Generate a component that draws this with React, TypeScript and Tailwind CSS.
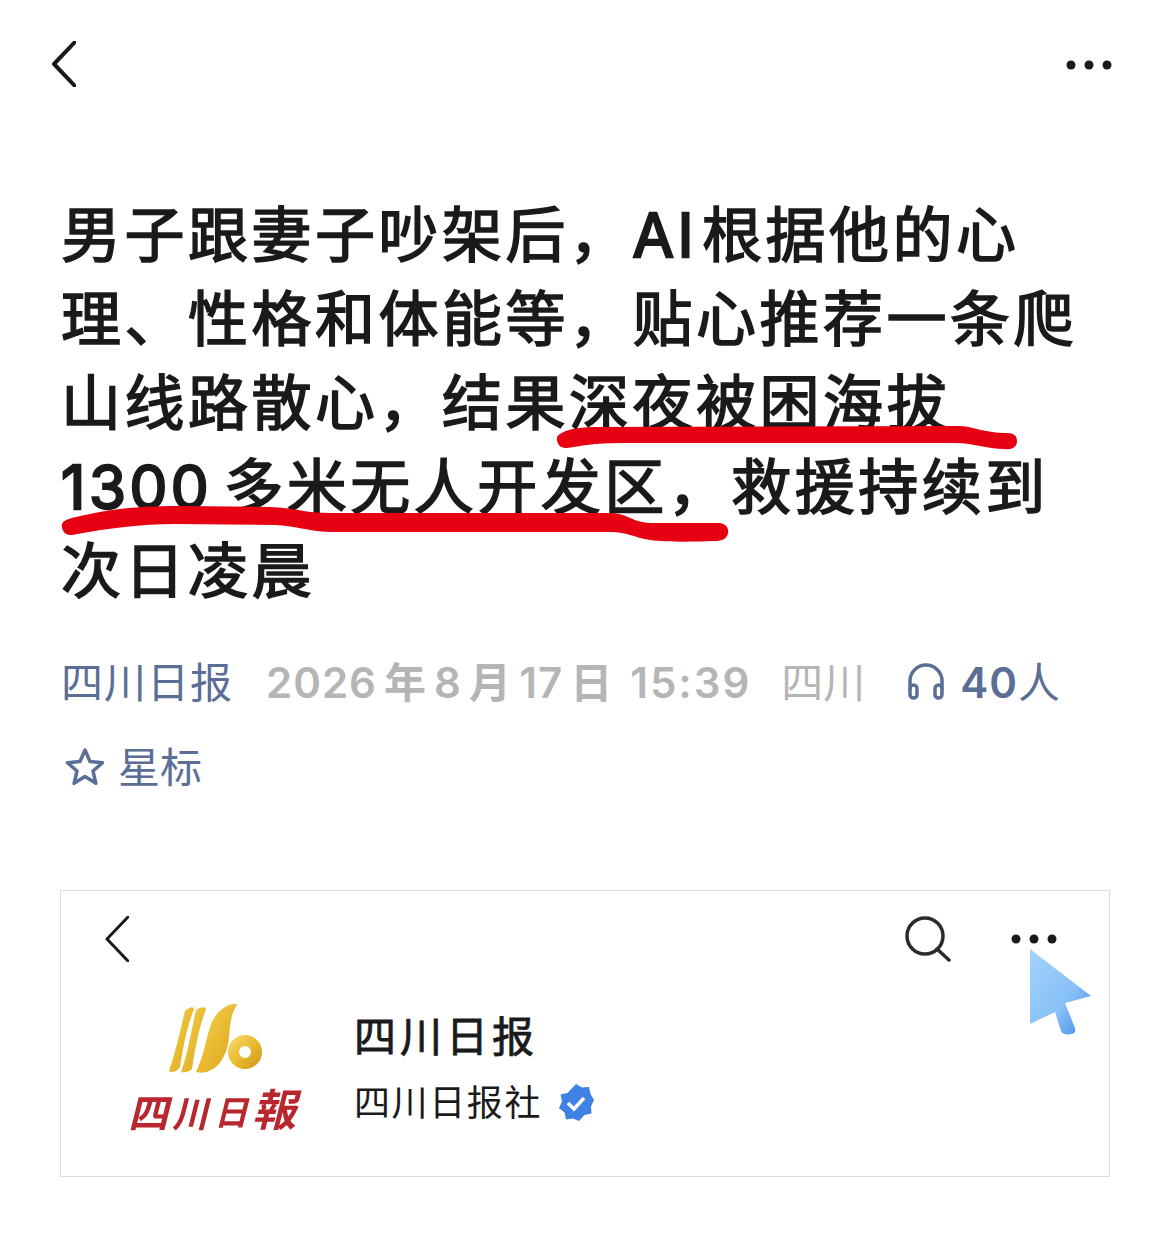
import React from "react";

const CJK = '"Inter", "Noto Sans CJK SC", sans-serif';

const Chevron: React.FC<{ className: string; strokeWidth: number }> = ({ className, strokeWidth }) => (
  <svg className={className} viewBox="0 0 24 46" fill="none" stroke="#1a1a1a" strokeWidth={strokeWidth}>
    <path d="M23 1 2 23l21 22" strokeLinecap="round" strokeLinejoin="round" />
  </svg>
);

const Dots: React.FC<{ className: string; r: number }> = ({ className, r }) => (
  <svg className={className} viewBox="0 0 46 10" fill="#1a1a1a">
    <circle cx="5" cy="5" r={r} />
    <circle cx="23" cy="5" r={r} />
    <circle cx="41" cy="5" r={r} />
  </svg>
);

const Logo: React.FC = () => (
  <div className="w-[180px] pl-[6px]">
    <svg className="ml-[35px] w-[104px] h-[74px] blur-[0.5px]" viewBox="0 0 104 74">
      <defs>
        <linearGradient id="gold" x1="0" y1="0" x2="1" y2="1">
          <stop offset="0" stopColor="#f4d35c" />
          <stop offset="0.55" stopColor="#e8b92e" />
          <stop offset="1" stopColor="#d9a020" />
        </linearGradient>
      </defs>
      <path d="M22 10C26 6 30 5 31 8 24 26 20 46 17 66 14 71 8 72 6 70 13 50 17 30 22 10z" fill="url(#gold)" />
      <path d="M33 9C37 6 42 5 43 8 36 26 32 48 29 68 26 71 20 72 18 71 25 52 28 30 33 9z" fill="url(#gold)" />
      <path d="M62 6C66 3 74 2 74 4 68 12 67 24 66 36 65 50 58 66 46 70 42 72 36 72 33 71 41 54 43 38 47 26 50 17 55 10 62 6z" fill="url(#gold)" />
      <circle cx="82" cy="51" r="11.5" fill="none" stroke="url(#gold)" strokeWidth="11" />
    </svg>
    <div
      className="h-[62px] flex items-end whitespace-nowrap text-[#b8262e] italic font-bold blur-[0.4px]"
      style={{ fontFamily: '"Noto Sans CJK TC", sans-serif' }}
    >
      <span className="text-[40px] leading-[52px]">四</span>
      <span className="ml-[4px] text-[36px] leading-[52px]">川</span>
      <span className="ml-[6px] text-[34px] leading-[52px]">日</span>
      <span className="ml-[4px] text-[44px] leading-[60px]">報</span>
    </div>
  </div>
);

export default function App() {
  return (
    <div className="w-[1170px] h-[1238px] bg-white relative overflow-hidden" style={{ fontFamily: CJK }}>
      {/* top bar */}
      <div className="flex items-start justify-between pt-[41px] pl-[52px] pr-[58px] h-[193px]">
        <Chevron className="w-[24px] h-[46px]" strokeWidth={4} />
        <Dots className="w-[46px] h-[10px] mt-[19px]" r={4.5} />
      </div>

      {/* headline */}
      <h1 className="pl-[61px] text-[60px] leading-[84px] font-normal tracking-[3.5px] text-[#1a1a1a] [-webkit-text-stroke:1.6px_#1a1a1a] whitespace-nowrap">
        <div>
          男子跟妻子吵架后，<span className="[-webkit-text-stroke:2.4px_#1a1a1a]">AI</span>
          <span className="ml-[5px]">根据他的心</span>
        </div>
        <div>理、性格和体能等，贴心推荐一条爬</div>
        <div>山线路散心，结果深夜被困海拔</div>
        <div>
          <span className="[-webkit-text-stroke:2.4px_#1a1a1a]">1300</span>
          <span className="ml-[11px]">多米无人开发区，救援持续到</span>
        </div>
        <div>次日凌晨</div>
      </h1>

      {/* meta */}
      <div className="mt-[39px] pl-[61px] flex items-center h-[60px] text-[42px] whitespace-nowrap">
        <span className="text-[#5b6e96] tracking-[1px]">四川日报</span>
        <span className="ml-[33px] text-[#b5b5b5] font-semibold tracking-[1px] [word-spacing:-4.5px]">2026 年 8 月 17 日</span>
        <span className="ml-[17px] text-[#b5b5b5] font-semibold tracking-[2px]">15:39</span>
        <span className="ml-[30px] text-[#b5b5b5]">四川</span>
        <svg className="ml-[42px] w-[38px] h-[38px]" viewBox="0 0 38 38" fill="none" stroke="#5b6e96" strokeWidth="3.5">
          <path d="M3 27V18a16 16 0 0 1 32 0v9" />
          <rect x="3" y="22" width="7" height="13" rx="3.5" />
          <rect x="28" y="22" width="7" height="13" rx="3.5" />
        </svg>
        <span className="ml-[15px] text-[#5b6e96] font-semibold tracking-[1px]">40</span>
        <span className="text-[#5b6e96]">人</span>
      </div>
      <div className="mt-[25px] pl-[65px] flex items-center h-[60px] text-[42px] text-[#5b6e96]">
        <svg className="w-[40px] h-[40px]" viewBox="0 0 40 40" fill="none" stroke="#5b6e96" strokeWidth="3.5" strokeLinejoin="round">
          <path d="M20 3l5 11.5 12.5 1.2-9.5 8.3 2.9 12.3L20 29.6 9.100 36.300 12 24l-9.500-8.300L15 14.500z" />
        </svg>
        <span className="ml-[13px]">星标</span>
      </div>

      {/* embedded screenshot card */}
      <div className="ml-[60px] mt-[93px] w-[1050px] h-[287px] border border-[#dcdcdc] relative">
        <div className="flex items-start justify-between pl-[44px] pr-[52px] pt-[25px] h-[110px]">
          <Chevron className="w-[24px] h-[46px]" strokeWidth={3} />
          <div className="flex items-start gap-[60px]">
            <svg className="w-[46px] h-[46px]" viewBox="0 0 46 46" fill="none" stroke="#2b2b2b" strokeWidth="3.500" strokeLinecap="round">
              <circle cx="20" cy="20" r="18" />
              <path d="M32 33l12 11" />
            </svg>
            <Dots className="w-[46px] h-[10px] mt-[18px]" r={4.5} />
          </div>
        </div>
        <div className="flex items-start pl-[61px]">
          <Logo />
          <div className="ml-[52px] mt-[6px] text-[#1a1a1a] whitespace-nowrap">
            <div className="text-[42px] leading-[60px] tracking-[4px] [-webkit-text-stroke:0.8px_#1a1a1a]">四川日报</div>
            <div className="mt-[6px] flex items-center text-[36px] leading-[60px] tracking-[1.6px]">
              四川日报社
              <svg className="ml-[16px] w-[36px] h-[38px]" viewBox="0 0 36 38">
                <path
                  d="M18 0l6 3.500 7-.5 1.500 7 3.500 6-3 6.500.5 7-7 1.500L21 37l-6-2.500-7 1-1.500-7L1 24l3-6.500L2.500 10.500l7-1.500z"
                  fill="#3f82e6"
                />
                <path d="M10 19l6 6 10-11" fill="none" stroke="#fff" strokeWidth="3.5" />
              </svg>
            </div>
          </div>
        </div>
      </div>

      {/* red marker strokes drawn over the headline */}
      <svg className="absolute left-0 top-0 w-[1170px] h-[1238px] pointer-events-none" viewBox="0 0 1170 1238">
        <path
          d="M557 437C562 430 575 428 590 427L960 426C975 427 985 433 1007 433 1014 433 1017 436 1017 441 1017 447 1012 450 1005 449 985 449 975 443 955 443L620 443C595 443 580 446 567 448 560 449 556 443 557 437Z"
          fill="#e60012"
        />
        <path
          d="M62 524C64 519 72 518 85 515 115 508 145 506 180 506L270 507C295 508 305 513 330 513L612 513C628 514 632 522 650 523L720 523C726 524 729 528 728 533 727 539 722 541 715 541 690 542 665 542 650 540 635 538 628 532 610 532L330 532C305 531 295 525 270 525L175 524C140 524 110 528 72 535 65 536 61 530 62 524Z"
          fill="#e60012"
        />
      </svg>

      {/* cursor */}
      <svg className="absolute left-[1028px] top-[946px] w-[66px] h-[92px]" viewBox="0 0 66 92">
        <defs>
          <linearGradient id="cursor" x1="0" y1="0" x2="1" y2="1">
            <stop offset="0" stopColor="#a5d3fb" />
            <stop offset="0.6" stopColor="#86c0f7" />
            <stop offset="1" stopColor="#3f88e6" />
          </linearGradient>
        </defs>
        <path
          d="M2 3l61 47-26 7 10 25c1 4-1 6-4 6-3 1-8 1-10-3L27 66 2 78z"
          fill="url(#cursor)"
        />
      </svg>
    </div>
  );
}
